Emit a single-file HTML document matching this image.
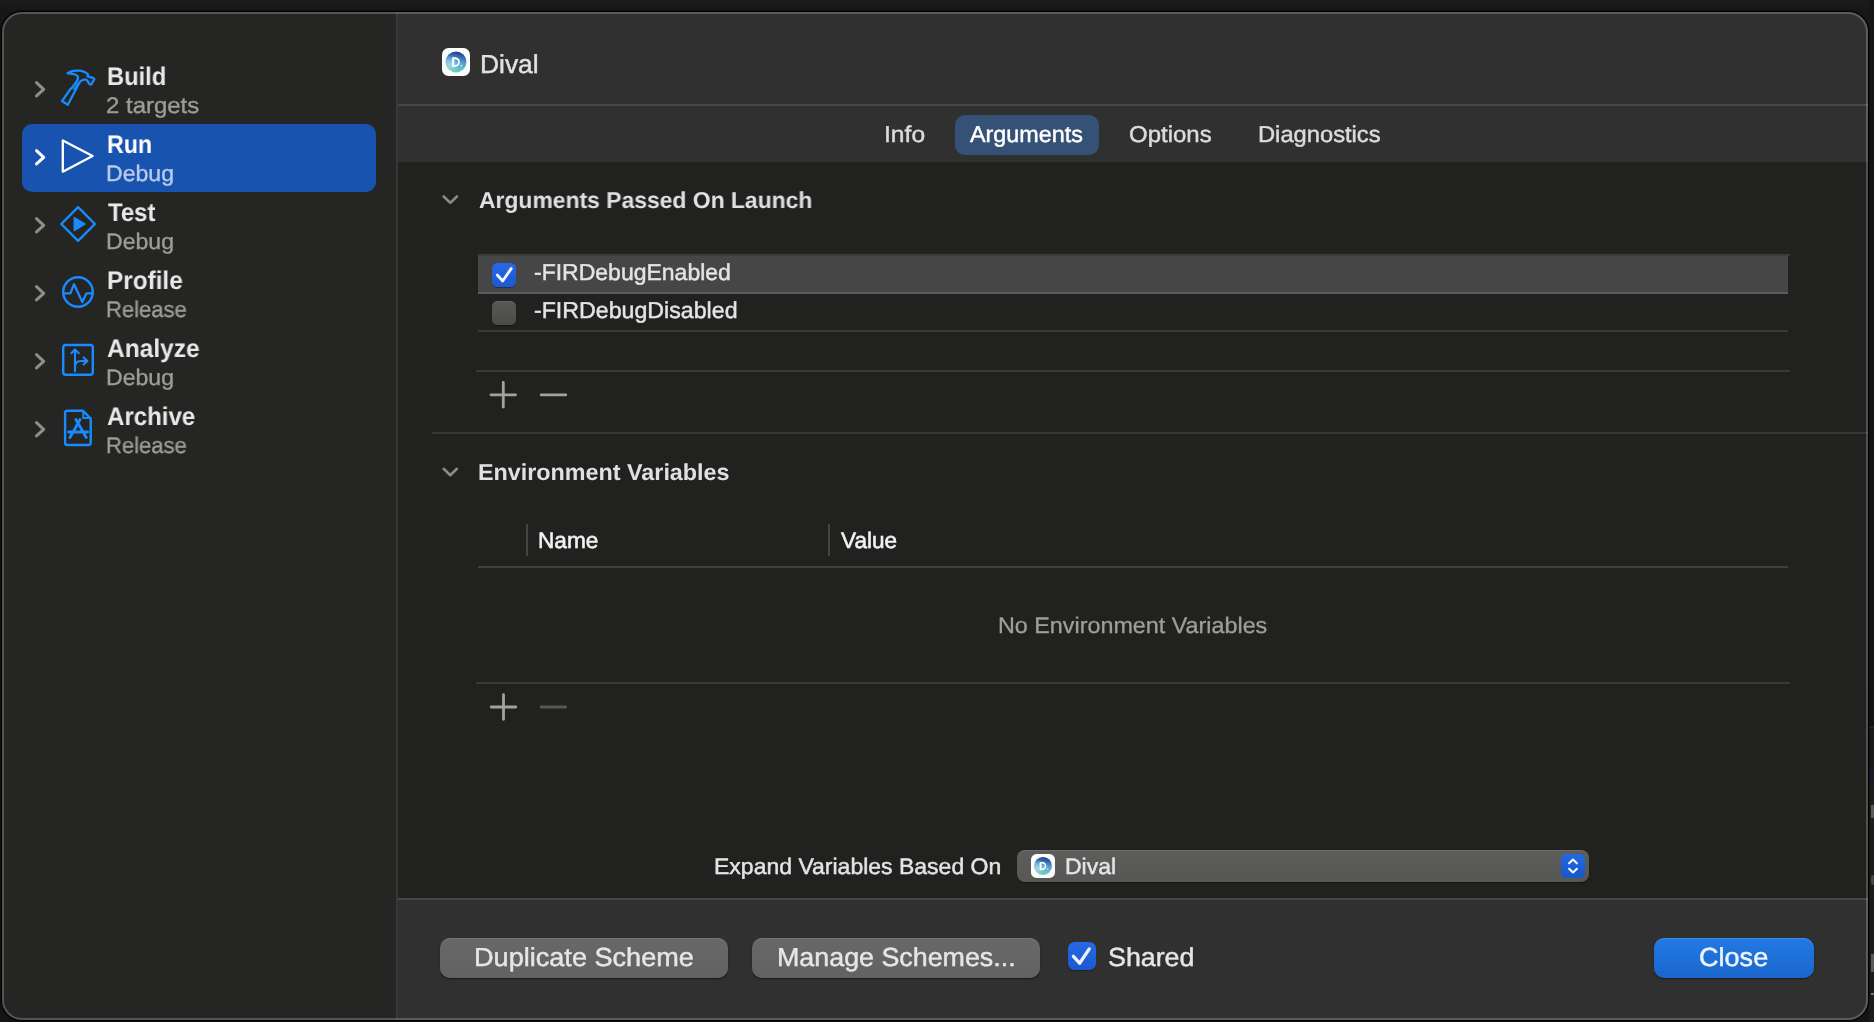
<!DOCTYPE html>
<html><head><meta charset="utf-8"><title>Scheme Editor</title>
<style>
html,body{margin:0;padding:0;}
body{width:1874px;height:1022px;overflow:hidden;position:relative;background:linear-gradient(#1b1b1b 0px,#161616 12px,#141414 1022px);font-family:"Liberation Sans", sans-serif;}
.b{position:absolute;box-sizing:border-box}
.t{position:absolute;white-space:nowrap;transform-origin:0 0;will-change:transform;text-rendering:geometricPrecision;font-family:"Liberation Sans", sans-serif;}
.ov{position:absolute;left:0;top:0;pointer-events:none}
#win{position:absolute;left:2px;top:12px;width:1866px;height:1008px;border-radius:20px;overflow:hidden;box-shadow:0 0 0 1px #000, 0 0 0 2px rgba(0,0,0,.35)}
#wc{position:absolute;left:-2px;top:-12px;width:1874px;height:1022px}
#rim{position:absolute;left:2px;top:12px;width:1866px;height:1008px;border-radius:20px;box-sizing:border-box;border:2px solid rgba(255,255,255,.215);pointer-events:none}
</style></head><body>
<div class="b" style="left:1869px;top:0px;width:5px;height:1022px;background:linear-gradient(#151515 0px,#131313 726px,#2a2a2a 727px,#191817 729px,#191817 770px,#131a28 771px,#131a28 782px,#1e1c18 783px,#1e1c18 1022px)"></div>
<div class="b" style="left:1871px;top:805px;width:3px;height:13px;background:#5a5a5a"></div>
<div class="b" style="left:1871px;top:875px;width:3px;height:10px;background:#4a4a4a;border-radius:3px 0 0 3px"></div>
<div class="b" style="left:1871px;top:954px;width:3px;height:18px;background:#5a5a5a"></div>
<div class="b" style="left:1871px;top:993px;width:3px;height:2px;background:#777"></div>
<div id="win"><div id="wc">
<div class="b" style="left:0px;top:0px;width:396px;height:1022px;background:#252524"></div>
<div class="b" style="left:396px;top:0px;width:2px;height:1022px;background:#383838"></div>
<div class="b" style="left:398px;top:0px;width:1480px;height:1022px;background:#212120"></div>
<div class="b" style="left:398px;top:0px;width:1480px;height:104px;background:#303030"></div>
<div class="b" style="left:398px;top:104px;width:1480px;height:2px;background:#474747"></div>
<div class="b" style="left:398px;top:106px;width:1480px;height:56px;background:#303030"></div>
<div class="b" style="left:398px;top:898px;width:1480px;height:2px;background:#464646"></div>
<div class="b" style="left:398px;top:900px;width:1480px;height:130px;background:#303030"></div>
<div class="b" style="left:22px;top:124px;width:354px;height:68px;background:#1953b0;border-radius:10px"></div>
<div class="b" style="left:955px;top:115px;width:144px;height:40px;background:#355175;border-radius:10px"></div>
<div class="b" style="left:478px;top:255px;width:1310px;height:38px;background:#464646"></div>
<div class="b" style="left:478px;top:254px;width:1312px;height:2px;background:#3b3b3b"></div>
<div class="b" style="left:478px;top:292px;width:1310px;height:2px;background:#5b5b5b"></div>
<div class="b" style="left:478px;top:330px;width:1310px;height:2px;background:#3a3a39"></div>
<div class="b" style="left:476px;top:370px;width:1314px;height:2px;background:#3a3a39"></div>
<div class="b" style="left:432px;top:432px;width:1450px;height:2px;background:#363635"></div>
<div class="b" style="left:526px;top:524px;width:2px;height:32px;background:#454545"></div>
<div class="b" style="left:828px;top:524px;width:2px;height:32px;background:#454545"></div>
<div class="b" style="left:478px;top:566px;width:1310px;height:2px;background:#3f3f3e"></div>
<div class="b" style="left:476px;top:682px;width:1314px;height:2px;background:#3a3a39"></div>
<div class="b" style="left:492px;top:263px;width:24px;height:24px;border-radius:5.5px;background:linear-gradient(#2769e6,#1c58d0);box-shadow:0 1px 1px rgba(0,0,0,.35)"></div>
<div class="b" style="left:492px;top:301px;width:24px;height:24px;border-radius:5.5px;background:linear-gradient(#585857,#4a4a49);box-shadow:0 1px 1px rgba(0,0,0,.35), inset 0 1px 0 rgba(255,255,255,.08)"></div>
<div class="b" style="left:1068px;top:942px;width:28px;height:28px;border-radius:6.5px;background:linear-gradient(#2769e6,#1c58d0);box-shadow:0 1px 1px rgba(0,0,0,.35)"></div>
<div class="b" style="left:1017px;top:850px;width:572px;height:32px;border-radius:8px;background:linear-gradient(#5d5d5c,#575756);box-shadow:0 1px 1px rgba(0,0,0,.4), inset 0 1px 0 rgba(255,255,255,.10)"></div>
<div class="b" style="left:1561px;top:854px;width:24px;height:24px;border-radius:5.5px;background:linear-gradient(#2269e6,#1757c6)"></div>
<div class="b" style="left:440px;top:938px;width:288px;height:40px;border-radius:10px;background:linear-gradient(#686868,#626262);box-shadow:0 1px 1.5px rgba(0,0,0,.45), inset 0 1px 0 rgba(255,255,255,.10)"></div>
<div class="b" style="left:752px;top:938px;width:288px;height:40px;border-radius:10px;background:linear-gradient(#686868,#626262);box-shadow:0 1px 1.5px rgba(0,0,0,.45), inset 0 1px 0 rgba(255,255,255,.10)"></div>
<div class="b" style="left:1654px;top:938px;width:160px;height:40px;border-radius:10px;background:linear-gradient(#2279e4,#1a66cc);box-shadow:0 1px 1.5px rgba(0,0,0,.45), inset 0 1px 0 rgba(255,255,255,.14)"></div>
</div></div>
<div id="rim"></div>
<svg class="ov" width="1874" height="1022" viewBox="0 0 1874 1022">
<defs><linearGradient id="ag" x1="0.62" y1="0" x2="0.4" y2="1">
<stop offset="0" stop-color="#22367f"/><stop offset="0.2" stop-color="#3464ae"/><stop offset="0.48" stop-color="#55a2d2"/><stop offset="0.8" stop-color="#66c3c8"/><stop offset="1" stop-color="#6ccbb3"/></linearGradient>
<radialGradient id="ah" cx="0.2" cy="0.62" r="0.45"><stop offset="0" stop-color="#d8f2f6" stop-opacity=".55"/><stop offset="1" stop-color="#d8f2f6" stop-opacity="0"/></radialGradient></defs>
<polyline points="36.5,82.7 43.7,89.3 36.5,95.89999999999999" fill="none" stroke="#8e8e8d" stroke-width="3" stroke-linecap="round" stroke-linejoin="round"/>
<polyline points="36.5,150.70000000000002 43.7,157.3 36.5,163.9" fill="none" stroke="#ffffff" stroke-width="3" stroke-linecap="round" stroke-linejoin="round"/>
<polyline points="36.5,218.70000000000002 43.7,225.3 36.5,231.9" fill="none" stroke="#8e8e8d" stroke-width="3" stroke-linecap="round" stroke-linejoin="round"/>
<polyline points="36.5,286.7 43.7,293.3 36.5,299.90000000000003" fill="none" stroke="#8e8e8d" stroke-width="3" stroke-linecap="round" stroke-linejoin="round"/>
<polyline points="36.5,354.7 43.7,361.3 36.5,367.90000000000003" fill="none" stroke="#8e8e8d" stroke-width="3" stroke-linecap="round" stroke-linejoin="round"/>
<polyline points="36.5,422.7 43.7,429.3 36.5,435.90000000000003" fill="none" stroke="#8e8e8d" stroke-width="3" stroke-linecap="round" stroke-linejoin="round"/>
<g fill="none" stroke="#188cff" stroke-width="2.3" stroke-linejoin="round" stroke-linecap="round">
<path d="M67.6 73.3 C70 71 75 70.3 79.5 70.7 C83 71.2 86.5 72.8 88.2 74.6 L87.4 76.2 C89 77.2 91.5 77.6 93 77.8 L94.4 79 L91.6 84 C91 84.8 90 84.8 89.2 83.8 L87.3 80.6 C86.5 79.5 85.5 79.2 84 79.6 C82 80.1 80.8 80.8 79.9 81.8 L75.6 90 L67.8 104.7 L62 101.1 L70.6 88.8 L72 88 L76.5 81.6 C78 79.5 78.4 77.5 77.5 76 C76 73.8 72 73.4 67.6 73.3 Z"/>
<path d="M78 83.2 L74 89.6" stroke-width="1.6"/>
</g>
<path d="M62.8 140.5 L62.8 171.7 L92.6 156.1 Z" fill="none" stroke="#ffffff" stroke-width="2.3" stroke-linejoin="round"/>
<path d="M78.1 207.2 L94.9 224 L78.1 240.8 L61.3 224 Z" fill="none" stroke="#188cff" stroke-width="2.4" stroke-linejoin="round"/>
<path d="M74.2 217.4 L85.2 224.1 L74.2 230.8 Z" fill="#188cff" stroke="#188cff" stroke-width="1.2" stroke-linejoin="round"/>
<circle cx="78" cy="292" r="14.8" fill="none" stroke="#188cff" stroke-width="2.4"/>
<polyline points="63.6,293.4 70.4,293.4 74,284.2 82.3,302 86.4,293.4 92.4,293.4" fill="none" stroke="#188cff" stroke-width="2.3" stroke-linejoin="round" stroke-linecap="round"/>
<g fill="none" stroke="#188cff" stroke-width="2.4" stroke-linejoin="round" stroke-linecap="round">
<rect x="63.2" y="345" width="29.6" height="29.8" rx="2.6"/>
<path d="M75 371.4 L75 349.6 M71.4 353.2 L75 349.4 L78.8 353.2 M75 367 C75 362.5 77.5 361 81 361 L87.2 361 M83.6 357.4 L87.4 361 L83.6 364.6" stroke-width="2.1"/>
</g>
<g fill="none" stroke="#188cff" stroke-width="2.4" stroke-linejoin="round" stroke-linecap="round">
<path d="M67.3 410.8 L83 410.8 L90.7 418.5 L90.7 442.8 Q90.7 445 88.5 445 L67.3 445 Q65.1 445 65.1 442.8 L65.1 413 Q65.1 410.8 67.3 410.8 Z"/>
<path d="M83.2 411.4 L83.2 418 L90.4 418" stroke-width="1.8"/>
<path d="M69.9 437.6 L80 419.6 M86.3 437.6 L76 419.6 M68.6 432 L87.6 432" stroke-width="2.9"/>
</g>
<polyline points="443.7,196.5 450.3,202.89999999999998 456.90000000000003,196.5" fill="none" stroke="#8a8a89" stroke-width="2.6" stroke-linecap="round" stroke-linejoin="round"/>
<polyline points="443.7,468.8 450.3,475.2 456.90000000000003,468.8" fill="none" stroke="#8a8a89" stroke-width="2.6" stroke-linecap="round" stroke-linejoin="round"/>
<path d="M491.0 394.8 L515.6 394.8 M503.3 382.5 L503.3 407.1" stroke="#a2a2a1" stroke-width="2.8" stroke-linecap="round" fill="none"/>
<path d="M541.2 394.8 L565.8 394.8" stroke="#a2a2a1" stroke-width="2.8" stroke-linecap="round" fill="none"/>
<path d="M491.2 707 L515.8 707 M503.5 694.7 L503.5 719.3" stroke="#a2a2a1" stroke-width="2.8" stroke-linecap="round" fill="none"/>
<path d="M541.1 707 L565.6999999999999 707" stroke="#565655" stroke-width="2.8" stroke-linecap="round" fill="none"/>
<polyline points="497.3,275 502.7,281 511.2,268.6" fill="none" stroke="#f2f5fd" stroke-width="2.8" stroke-linecap="round" stroke-linejoin="round"/>
<polyline points="1073.4,956.3 1079.6,963.2 1089.3,948.9" fill="none" stroke="#ecf1fc" stroke-width="3.3" stroke-linecap="round" stroke-linejoin="round"/>
<polyline points="1569.1,863.3 1573,859.6 1576.9,863.3" fill="none" stroke="#f4f7fd" stroke-width="2.1" stroke-linecap="round" stroke-linejoin="round"/>
<polyline points="1569.1,868.8 1573,872.4 1576.9,868.8" fill="none" stroke="#f4f7fd" stroke-width="2.1" stroke-linecap="round" stroke-linejoin="round"/>
<rect x="442" y="48" width="28" height="28" rx="6.50" fill="#fdfdfd"/>
<circle cx="456.0" cy="61.95" r="10.45" fill="url(#ag)"/><circle cx="456.0" cy="61.95" r="10.45" fill="url(#ah)"/>
<path d="M452.10 57.35 h3.19 c6.08 0 6.08 9.40 0 9.40 h-3.19 Z M454.20 59.13 v5.83 h1.09 c3.80 0 3.80 -5.83 0 -5.83 Z" fill="#ffffff" fill-rule="evenodd"/>
<circle cx="461.30" cy="65.55" r="0.90" fill="#ffffff" fill-opacity=".75"/>
<rect x="1031" y="854" width="24" height="24" rx="5.57" fill="#fdfdfd"/>
<circle cx="1043.0" cy="865.9571428571429" r="8.96" fill="url(#ag)"/><circle cx="1043.0" cy="865.9571428571429" r="8.96" fill="url(#ah)"/>
<path d="M1039.66 862.01 h2.74 c5.21 0 5.21 8.06 0 8.06 h-2.74 Z M1041.46 863.54 v5.00 h0.94 c3.26 0 3.26 -5.00 0 -5.00 Z" fill="#ffffff" fill-rule="evenodd"/>
<circle cx="1047.54" cy="869.04" r="0.77" fill="#ffffff" fill-opacity=".75"/>
</svg>
<div class="t" style="left:106.57px;top:62px;font-size:25.5px;line-height:31px;font-weight:bold;color:#e8e8e8;-webkit-text-stroke:0px #e8e8e8;transform:scaleX(0.9287)">Build</div>
<div class="t" style="left:106.24px;top:92px;font-size:22.5px;line-height:27px;font-weight:normal;color:#9c9c9b;-webkit-text-stroke:0.35px #9c9c9b;transform:scaleX(1.0649)">2 targets</div>
<div class="t" style="left:106.59px;top:130px;font-size:25.5px;line-height:31px;font-weight:bold;color:#ffffff;-webkit-text-stroke:0px #ffffff;transform:scaleX(0.9087)">Run</div>
<div class="t" style="left:106.28px;top:160px;font-size:22.5px;line-height:27px;font-weight:normal;color:#b9cbea;-webkit-text-stroke:0.35px #b9cbea;transform:scaleX(1.0249)">Debug</div>
<div class="t" style="left:107.50px;top:198px;font-size:25.5px;line-height:31px;font-weight:bold;color:#e8e8e8;-webkit-text-stroke:0px #e8e8e8;transform:scaleX(0.9383)">Test</div>
<div class="t" style="left:106.28px;top:228px;font-size:22.5px;line-height:27px;font-weight:normal;color:#9c9c9b;-webkit-text-stroke:0.35px #9c9c9b;transform:scaleX(1.0249)">Debug</div>
<div class="t" style="left:106.55px;top:266px;font-size:25.5px;line-height:31px;font-weight:bold;color:#e8e8e8;-webkit-text-stroke:0px #e8e8e8;transform:scaleX(0.9543)">Profile</div>
<div class="t" style="left:106.32px;top:296px;font-size:22.5px;line-height:27px;font-weight:normal;color:#9c9c9b;-webkit-text-stroke:0.35px #9c9c9b;transform:scaleX(0.9786)">Release</div>
<div class="t" style="left:106.50px;top:334px;font-size:25.5px;line-height:31px;font-weight:bold;color:#e8e8e8;-webkit-text-stroke:0px #e8e8e8;transform:scaleX(0.9606)">Analyze</div>
<div class="t" style="left:106.28px;top:364px;font-size:22.5px;line-height:27px;font-weight:normal;color:#9c9c9b;-webkit-text-stroke:0.35px #9c9c9b;transform:scaleX(1.0249)">Debug</div>
<div class="t" style="left:106.50px;top:402px;font-size:25.5px;line-height:31px;font-weight:bold;color:#e8e8e8;-webkit-text-stroke:0px #e8e8e8;transform:scaleX(0.9436)">Archive</div>
<div class="t" style="left:106.32px;top:432px;font-size:22.5px;line-height:27px;font-weight:normal;color:#9c9c9b;-webkit-text-stroke:0.35px #9c9c9b;transform:scaleX(0.9786)">Release</div>
<div class="t" style="left:479.77px;top:48px;font-size:26px;line-height:32px;font-weight:normal;color:#e2e2e2;-webkit-text-stroke:0.45px #e2e2e2;transform:scaleX(1.0143)">Dival</div>
<div class="t" style="left:883.56px;top:120px;font-size:23px;line-height:28px;font-weight:normal;color:#dcdcdc;-webkit-text-stroke:0.45px #dcdcdc;transform:scaleX(1.0711)">Info</div>
<div class="t" style="left:970.40px;top:120px;font-size:23px;line-height:28px;font-weight:normal;color:#ffffff;-webkit-text-stroke:0.45px #ffffff;transform:scaleX(1.0161)">Arguments</div>
<div class="t" style="left:1129.16px;top:120px;font-size:23px;line-height:28px;font-weight:normal;color:#dcdcdc;-webkit-text-stroke:0.45px #dcdcdc;transform:scaleX(1.0429)">Options</div>
<div class="t" style="left:1257.67px;top:120px;font-size:23px;line-height:28px;font-weight:normal;color:#dcdcdc;-webkit-text-stroke:0.45px #dcdcdc;transform:scaleX(1.0308)">Diagnostics</div>
<div class="t" style="left:478.70px;top:186px;font-size:23px;line-height:28px;font-weight:bold;color:#e0e0e0;-webkit-text-stroke:0px #e0e0e0;transform:scaleX(0.9955)">Arguments Passed On Launch</div>
<div class="t" style="left:477.69px;top:458px;font-size:23px;line-height:28px;font-weight:bold;color:#e0e0e0;-webkit-text-stroke:0px #e0e0e0;transform:scaleX(1.0143)">Environment Variables</div>
<div class="t" style="left:534.00px;top:258px;font-size:23px;line-height:28px;font-weight:normal;color:#e4e4e4;-webkit-text-stroke:0.45px #e4e4e4;transform:scaleX(0.9990)">-FIRDebugEnabled</div>
<div class="t" style="left:533.99px;top:296px;font-size:23px;line-height:28px;font-weight:normal;color:#e4e4e4;-webkit-text-stroke:0.45px #e4e4e4;transform:scaleX(1.0076)">-FIRDebugDisabled</div>
<div class="t" style="left:537.89px;top:527px;font-size:22.5px;line-height:27px;font-weight:normal;color:#f2f2f2;-webkit-text-stroke:0.55px #f2f2f2;transform:scaleX(1.0068)">Name</div>
<div class="t" style="left:840.60px;top:527px;font-size:22.5px;line-height:27px;font-weight:normal;color:#f2f2f2;-webkit-text-stroke:0.55px #f2f2f2;transform:scaleX(1.0043)">Value</div>
<div class="t" style="left:997.56px;top:612px;font-size:22.5px;line-height:27px;font-weight:normal;color:#9e9e9d;-webkit-text-stroke:0.3px #9e9e9d;transform:scaleX(1.0369)">No Environment Variables</div>
<div class="t" style="left:713.58px;top:853px;font-size:22.5px;line-height:27px;font-weight:normal;color:#e4e4e4;-webkit-text-stroke:0.45px #e4e4e4;transform:scaleX(1.0222)">Expand Variables Based On</div>
<div class="t" style="left:1064.98px;top:853px;font-size:22.5px;line-height:27px;font-weight:normal;color:#e4e4e4;-webkit-text-stroke:0.45px #e4e4e4;transform:scaleX(1.0206)">Dival</div>
<div class="t" style="left:473.62px;top:941px;font-size:26px;line-height:32px;font-weight:normal;color:#e6e6e6;-webkit-text-stroke:0.45px #e6e6e6;transform:scaleX(1.0420)">Duplicate Scheme</div>
<div class="t" style="left:776.64px;top:941px;font-size:26px;line-height:32px;font-weight:normal;color:#e6e6e6;-webkit-text-stroke:0.45px #e6e6e6;transform:scaleX(1.0321)">Manage Schemes...</div>
<div class="t" style="left:1107.67px;top:941px;font-size:26px;line-height:32px;font-weight:normal;color:#e6e6e6;-webkit-text-stroke:0.45px #e6e6e6;transform:scaleX(1.0310)">Shared</div>
<div class="t" style="left:1698.56px;top:941px;font-size:26px;line-height:32px;font-weight:normal;color:#eef3fd;-webkit-text-stroke:0.45px #eef3fd;transform:scaleX(1.0413)">Close</div>
</body></html>
